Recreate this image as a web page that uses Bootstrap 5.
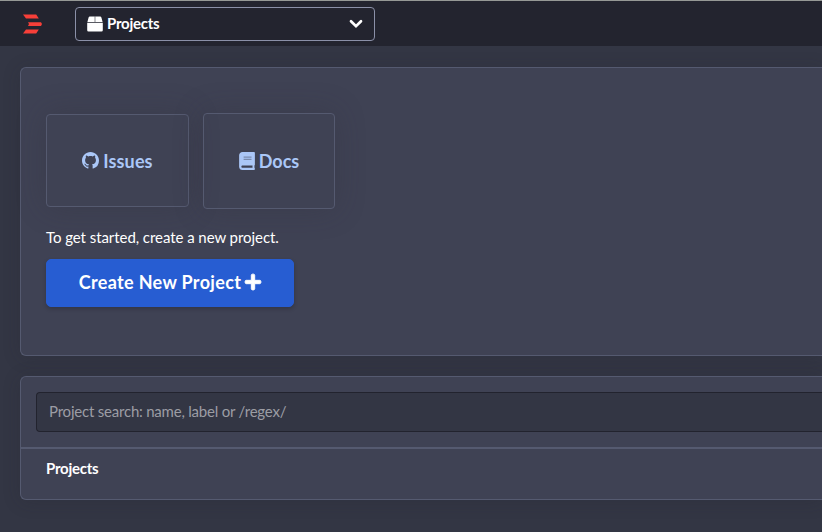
<!DOCTYPE html>
<html lang="en">
<head>
<meta charset="utf-8">
<meta name="viewport" content="width=device-width, initial-scale=1">
<title>Projects</title>
<link href="https://cdn.jsdelivr.net/npm/bootstrap@5.3.0/dist/css/bootstrap.min.css" rel="stylesheet">
<style>
body{background:#333644;color:#fff;font-family:Lato,"Open Sans",sans-serif;font-size:15px;line-height:20px;height:532px;overflow:hidden}
svg{fill:currentColor;display:block;flex:none}
.topbar{background:#23242f;border-top:1px solid #969996;height:46px;padding:6px 0 5px 23px}
.brand-mark{width:20px;height:20px;color:#f73f39;margin:0 32px 0 0}
.project-picker{width:300px;height:34px;border:1px solid #8b90a8;border-radius:4px;color:#fff;font-weight:700;font-size:15px;line-height:20px;padding:0 11px;background:none}
.picker-label{letter-spacing:-.25px;padding-bottom:2px}
.panel{background:#3f4254;border:1px solid #555a70;border-right:0;border-radius:6px 0 0 6px;margin-left:20px;box-shadow:0 2px 18px rgba(35,36,47,.2)}
.intro{margin-top:21px;height:289px;padding:45px 25px}
.tiles{gap:14px}
.tile{border:1px solid #555a70;border-radius:4px;box-shadow:0 0 30px rgba(50,48,60,.3);color:#abc7f7;font-weight:700;font-size:18px;text-decoration:none;gap:4px}
.tile-issues{width:143px;height:93px;margin-top:1px;letter-spacing:.12px}
.tile-docs{width:132px;height:96px;padding-bottom:1px}
.start-text{margin:18px 0 12px;letter-spacing:-.06px}
.btn-create{--bs-btn-color:#fff;--bs-btn-bg:#275dd2;--bs-btn-border-color:#275dd2;--bs-btn-border-radius:5px;width:248px;height:48px;font-size:18px;font-weight:700;gap:4px;padding:0;box-shadow:0 2px 4px rgba(0,0,0,.2)}
.btn-create span{letter-spacing:.33px;padding-bottom:1px}
.btn-create svg{overflow:visible;stroke:currentColor;stroke-width:26;margin-bottom:2px}
.listing{margin-top:20px;height:124px}
.search-area{padding:15px 0 15px 15px;border-bottom:2px solid #555a70}
.search-area .form-control{height:40px;background:#333644;border:1px solid #22232e;border-right:0;border-radius:4px 0 0 4px;color:#fff;font-size:15px;letter-spacing:-.21px;padding:0 12px 2px}
.search-area .form-control::placeholder{color:#9c9da4;opacity:1}
.list-title{font-weight:700;padding:9px 25px;font-size:15px;letter-spacing:-.25px}
</style>
</head>
<body>
<header class="topbar d-flex align-items-center">
  <svg class="brand-mark" viewBox="0 0 20 20"><path d="M0 .6h13.2l2.6 3.9H3zM5 8.3h13l1 1.8-1 1.8H5l1-1.8zM3 15.5h12.8l-2.6 4H0z"/></svg>
  <button type="button" class="project-picker d-flex align-items-center">
    <svg width="16" height="16" viewBox="0 0 16 16"><path d="M2.8.5H7.6V6H.4L1.6 1.4Q1.9.5 2.8.5zM8.4.5h4.8q.9 0 1.2.9L15.6 6H8.4zM.2 6.8h15.6v7.4q0 1.3-1.3 1.3h-13q-1.3 0-1.3-1.3z"/><path d="M7.5.5h1V6h-1z" opacity=".65"/></svg>
    <span class="picker-label ms-1">Projects</span>
    <svg class="ms-auto" width="14" height="14" viewBox="0 0 14 14"><path d="M2 4.3 7 9.2l5-4.9" fill="none" stroke="currentColor" stroke-width="2.7" stroke-linecap="round"/></svg>
  </button>
</header>
<main>
  <section class="panel intro">
    <div class="tiles d-flex align-items-start">
      <a href="#" class="tile tile-issues d-flex align-items-center justify-content-center">
        <svg width="17" height="17" viewBox="0 0 16 16"><path d="M8 0C3.58 0 0 3.58 0 8c0 3.54 2.29 6.53 5.47 7.59.4.07.55-.17.55-.38 0-.19-.01-.82-.01-1.49-2.01.37-2.53-.49-2.69-.94-.09-.23-.48-.94-.82-1.13-.28-.15-.68-.52-.01-.53.63-.01 1.08.58 1.23.82.72 1.21 1.87.87 2.33.66.07-.52.28-.87.51-1.07-1.78-.2-3.64-.89-3.64-3.95 0-.87.31-1.59.82-2.15-.08-.2-.36-1.02.08-2.12 0 0 .67-.21 2.2.82.64-.18 1.32-.27 2-.27s1.36.09 2 .27c1.53-1.04 2.2-.82 2.2-.82.44 1.1.16 1.92.08 2.12.51.56.82 1.27.82 2.15 0 3.07-1.87 3.75-3.65 3.95.29.25.54.73.54 1.48 0 1.07-.01 1.93-.01 2.2 0 .21.15.46.55.38A8.01 8.01 0 0 0 16 8c0-4.42-3.58-8-8-8z"/></svg>
        <span>Issues</span>
      </a>
      <a href="#" class="tile tile-docs d-flex align-items-center justify-content-center">
        <svg width="16" height="18" viewBox="0 0 448 512"><path d="M448 360V24c0-13.3-10.7-24-24-24H96C43 0 0 43 0 96v320c0 53 43 96 96 96h328c13.3 0 24-10.7 24-24v-16c0-7.5-3.5-14.3-8.9-18.7-4.2-15.4-4.2-59.3 0-74.7 5.4-4.3 8.9-11.1 8.9-18.6zM381.4 448H96c-17.7 0-32-14.3-32-32 0-17.6 14.4-32 32-32h285.4c-1.9 17.1-1.9 46.9 0 64z"/><path d="M128 128h224v32H128zm0 64h224v32H128z" fill="#3f4254" opacity=".45"/></svg>
        <span>Docs</span>
      </a>
    </div>
    <p class="start-text">To get started, create a new project.</p>
    <button type="button" class="btn btn-create d-flex align-items-center justify-content-center">
      <span>Create New Project</span>
      <svg width="16" height="18" viewBox="0 0 448 512"><path d="M416 208H272V64c0-17.67-14.33-32-32-32h-32c-17.67 0-32 14.33-32 32v144H32c-17.67 0-32 14.33-32 32v32c0 17.67 14.33 32 32 32h144v144c0 17.67 14.33 32 32 32h32c17.67 0 32-14.33 32-32V304h144c17.67 0 32-14.33 32-32v-32c0-17.67-14.33-32-32-32z"/></svg>
    </button>
  </section>
  <section class="panel listing">
    <div class="search-area"><input type="text" class="form-control" placeholder="Project search: name, label or /regex/"></div>
    <div class="list-title">Projects</div>
  </section>
</main>
<script src="https://cdn.jsdelivr.net/npm/bootstrap@5.3.0/dist/js/bootstrap.bundle.min.js"></script>
</body>
</html>
